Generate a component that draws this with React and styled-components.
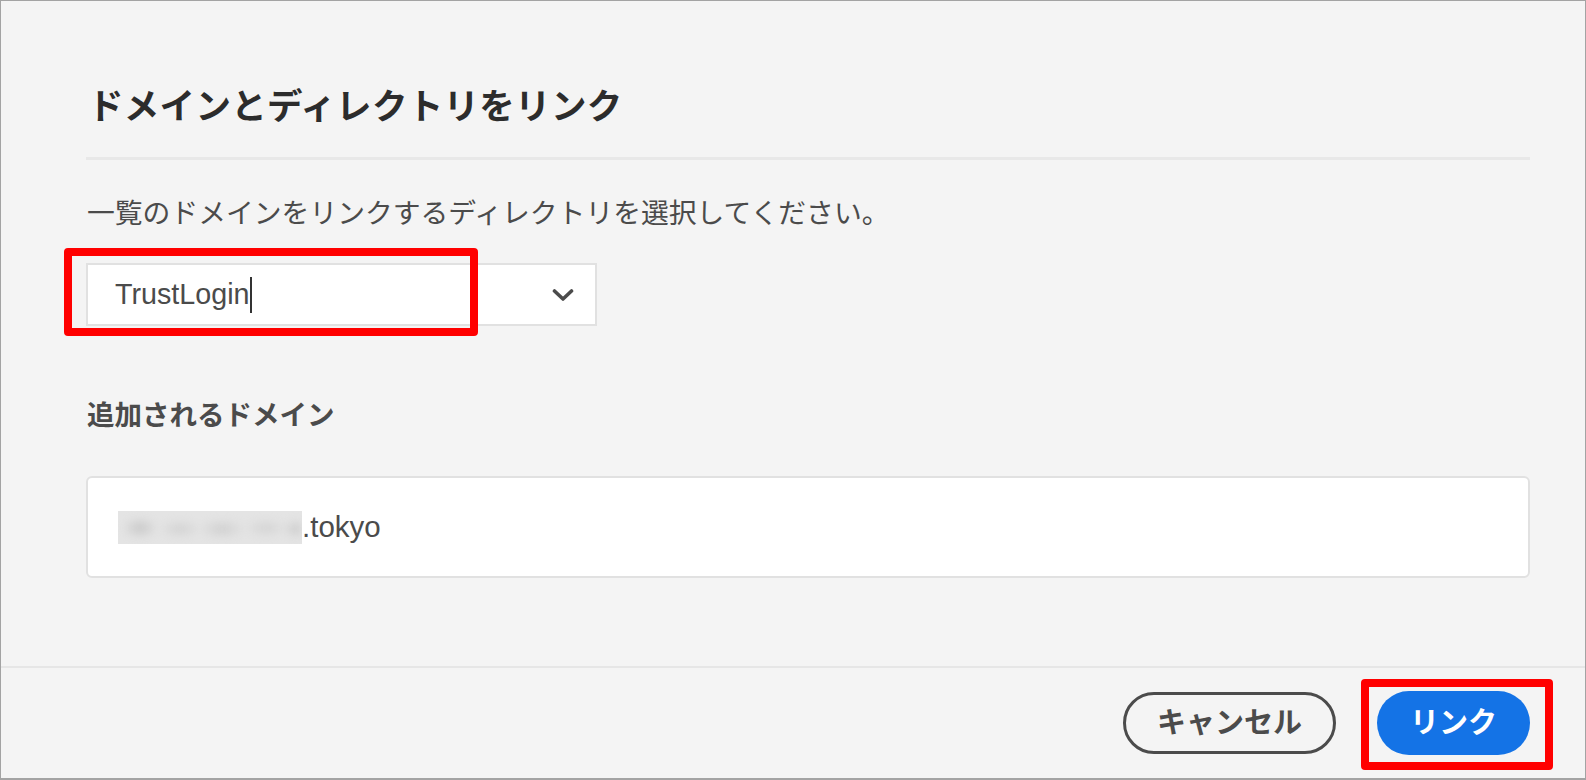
import React from "react";
import styled, { createGlobalStyle } from "styled-components";

const Global = createGlobalStyle`
  html, body { margin: 0; padding: 0; background: #ffffff; }
  body { font-family: "Liberation Sans", "Noto Sans CJK JP", sans-serif; }
  * { box-sizing: border-box; }
`;

const Frame = styled.div`
  width: 1586px;
  height: 780px;
  background: #f4f4f4;
  border: 1px solid #a3a3a3;
  border-bottom-width: 2px;
  display: flex;
  flex-direction: column;
`;

const Body = styled.div`
  flex: 1;
  padding: 84px 55px 0 85px;
  display: flex;
  flex-direction: column;
`;

const Title = styled.h1`
  margin: 0 0 0 2px;
  font-size: 35.5px;
  line-height: 44px;
  font-weight: 700;
  color: #2c2c2c;
  letter-spacing: 0.3px;
`;

const Divider = styled.div`
  height: 3px;
  background: #e8e8e8;
  margin-top: 28px;
`;

const Description = styled.p`
  margin: 34px 0 0 1px;
  font-size: 27.8px;
  line-height: 40px;
  color: #4b4b4b;
`;

const SelectWrap = styled.div`
  position: relative;
  margin-top: 29px;
  width: 511px;
`;

const Select = styled.div`
  height: 63px;
  background: #ffffff;
  border: 2px solid #e1e1e1;
  display: flex;
  align-items: center;
  padding: 0 21px 0 27px;
`;

const SelectValue = styled.span`
  flex: 1;
  display: flex;
  align-items: center;
  font-size: 28.7px;
  color: #4b4b4b;
`;

const Caret = styled.span`
  display: inline-block;
  width: 2px;
  height: 36px;
  background: #333333;
  margin-left: 1px;
`;

const Highlight = styled.div`
  position: absolute;
  left: ${(p) => p.$left}px;
  top: ${(p) => p.$top}px;
  width: ${(p) => p.$width}px;
  height: ${(p) => p.$height}px;
  border: 8px solid #ff0000;
  border-radius: 4px;
  pointer-events: none;
`;

const SectionHeading = styled.h2`
  margin: 70px 0 0 1px;
  font-size: 27.5px;
  line-height: 40px;
  font-weight: 700;
  color: #4b4b4b;
`;

const DomainBox = styled.div`
  margin-top: 40px;
  height: 102px;
  background: #ffffff;
  border: 2px solid #e1e1e1;
  border-radius: 6px;
  display: flex;
  align-items: center;
  padding-left: 30px;
`;

const Blurred = styled.span`
  display: inline-block;
  width: 184px;
  height: 33px;
  overflow: hidden;
  background: #e4e4e4;
`;

const BlurredInk = styled.span`
  display: block;
  width: 100%;
  height: 100%;
  background:
    radial-gradient(ellipse 18px 12px at 22px 17px, #c9c9c9, transparent),
    radial-gradient(ellipse 22px 10px at 62px 18px, #d3d3d3, transparent),
    radial-gradient(ellipse 24px 11px at 104px 18px, #d0d0d0, transparent),
    radial-gradient(ellipse 22px 10px at 148px 17px, #d4d4d4, transparent),
    radial-gradient(ellipse 14px 11px at 178px 18px, #cfcfcf, transparent);
  filter: blur(3px);
`;

const DomainText = styled.span`
  font-size: 29.5px;
  color: #4b4b4b;
`;

const Footer = styled.div`
  border-top: 2px solid #e6e6e6;
  height: 112px;
  display: flex;
  align-items: center;
  justify-content: flex-end;
  gap: 41px;
  padding-right: 55px;
`;

const Button = styled.button`
  height: ${(p) => (p.$primary ? 64 : 62)}px;
  padding: 0 ${(p) => (p.$primary ? 33 : 31)}px;
  border-radius: 32px;
  border: ${(p) => (p.$primary ? "none" : "3px solid #4b4b4b")};
  background: ${(p) => (p.$primary ? "#1473e6" : "transparent")};
  color: ${(p) => (p.$primary ? "#ffffff" : "#4b4b4b")};
  font-family: "Liberation Sans", "Noto Sans CJK JP", sans-serif;
  font-size: 29px;
  font-weight: 700;
  line-height: 1;
  cursor: pointer;
`;

const ButtonWrap = styled.div`
  position: relative;
  display: flex;
`;

function Chevron() {
  return (
    <svg width="22" height="14" viewBox="0 0 22 14" fill="none">
      <polyline
        points="2.5,3 11,11 19.5,3"
        stroke="#4b4b4b"
        strokeWidth="3.6"
        strokeLinecap="round"
        strokeLinejoin="round"
      />
    </svg>
  );
}

export default function App() {
  return (
    <>
      <Global />
      <Frame>
        <Body>
          <Title>ドメインとディレクトリをリンク</Title>
          <Divider />
          <Description>
            一覧のドメインをリンクするディレクトリを選択してください。
          </Description>
          <SelectWrap>
            <Select>
              <SelectValue>
                TrustLogin
                <Caret />
              </SelectValue>
              <Chevron />
            </Select>
            <Highlight $left={-22} $top={-15} $width={414} $height={88} />
          </SelectWrap>
          <SectionHeading>追加されるドメイン</SectionHeading>
          <DomainBox>
            <Blurred aria-hidden="true">
              <BlurredInk />
            </Blurred>
            <DomainText>.tokyo</DomainText>
          </DomainBox>
        </Body>
        <Footer>
          <Button>キャンセル</Button>
          <ButtonWrap>
            <Button $primary>リンク</Button>
            <Highlight $left={-16} $top={-12} $width={192} $height={91} />
          </ButtonWrap>
        </Footer>
      </Frame>
    </>
  );
}
